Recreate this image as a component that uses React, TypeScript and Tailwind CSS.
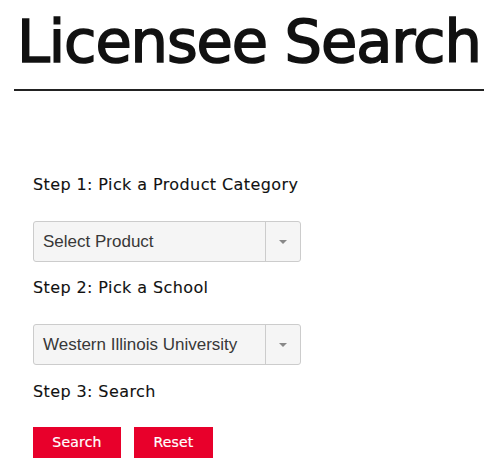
import React from "react";

function Select({ value }: { value: string }) {
  return (
    <div className="flex h-[41px] w-[268px] items-stretch rounded-[3px] border border-[#cccccc] bg-[#f5f5f5]">
      <div
        className="flex flex-1 items-center pl-[9px] text-[17px] text-[#383838]"
        style={{ fontFamily: '"Liberation Sans", Arial, sans-serif' }}
      >
        {value}
      </div>
      <div className="flex w-[35px] items-center justify-center border-l border-[#cccccc]">
        <div className="h-0 w-0 border-l-[4px] border-r-[4px] border-t-[4px] border-l-transparent border-r-transparent border-t-[#888888]" />
      </div>
    </div>
  );
}

export default function App() {
  const mont = { fontFamily: '"DejaVu Sans", "Open Sans", sans-serif' };
  return (
    <div className="h-[465px] w-[500px] overflow-hidden bg-white px-[14px]" style={mont}>
      <div className="pt-[6px]">
        <h1 className="pl-[3px] text-[59px] leading-[72px] tracking-[-1.1px] text-[#111111] [-webkit-text-stroke:1.6px_#111111]">
          Licensee Search
        </h1>
      </div>
      <div className="mt-[11px] h-[2px] w-[470px] bg-[#222222]" />
      <div className="pl-[19px]">
        <div className="mt-[82px] text-[16px] leading-[24px] tracking-[0.4px] text-[#111111] [-webkit-text-stroke:0.1px_#111111]">
          Step 1: Pick a Product Category
        </div>
        <div className="mt-[24px]">
          <Select value="Select Product" />
        </div>
        <div className="mt-[14px] text-[16px] leading-[24px] tracking-[0.4px] text-[#111111] [-webkit-text-stroke:0.1px_#111111]">
          Step 2: Pick a School
        </div>
        <div className="mt-[24px]">
          <Select value="Western Illinois University" />
        </div>
        <div className="mt-[15px] text-[16px] leading-[24px] tracking-[0.4px] text-[#111111] [-webkit-text-stroke:0.1px_#111111]">
          Step 3: Search
        </div>
        <div className="mt-[23px] flex gap-[13px]">
          <button className="h-[31px] w-[88px] bg-[#e8002b] text-[14px] tracking-[0.2px] text-white [-webkit-text-stroke:0.2px_#ffffff]">
            Search
          </button>
          <button className="h-[31px] w-[79px] bg-[#e8002b] text-[14px] tracking-[0.2px] text-white [-webkit-text-stroke:0.2px_#ffffff]">
            Reset
          </button>
        </div>
      </div>
    </div>
  );
}
